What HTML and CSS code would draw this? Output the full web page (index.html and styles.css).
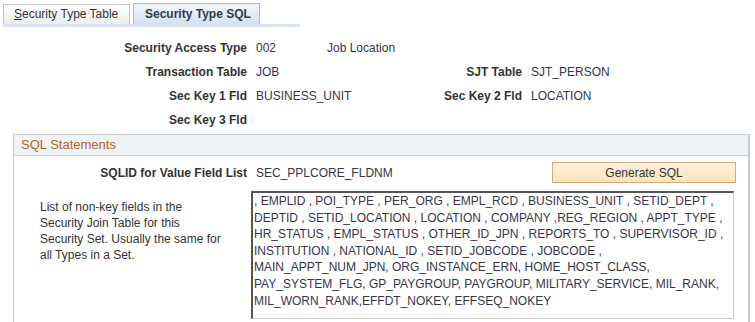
FILE: index.html
```html
<!DOCTYPE html>
<html lang="en">
<head>
    <meta charset="UTF-8">
    <title>Security Type SQL</title>
    <link rel="stylesheet" href="styles.css">
</head>
<body>
    <div class="tabs">
        <div class="tab"><u>S</u>ecurity Type Table</div>
        <div class="tab active">Security Type SQL</div>
    </div>
    <div class="tab-rule"></div>

    <div class="fields">
        <div class="label">Security Access Type</div>
        <div class="value wide"><span class="code">002</span>Job Location</div>

        <div class="label">Transaction Table</div>
        <div class="value">JOB</div>
        <div class="label">SJT Table</div>
        <div class="value">SJT_PERSON</div>

        <div class="label">Sec Key 1 Fld</div>
        <div class="value">BUSINESS_UNIT</div>
        <div class="label">Sec Key 2 Fld</div>
        <div class="value">LOCATION</div>

        <div class="label">Sec Key 3 Fld</div>
        <div class="value wide"></div>
    </div>

    <section class="group">
        <div class="group-head">SQL Statements</div>
        <div class="group-body">
            <div class="sqlid-row">
                <div class="label">SQLID for Value Field List</div>
                <div class="value">SEC_PPLCORE_FLDNM</div>
                <button class="gen-button">Generate SQL</button>
            </div>
            <div class="list-row">
                <div class="help">
                    List of non-key fields in the<br>
                    Security Join Table for this<br>
                    Security Set. Usually the same for<br>
                    all Types in a Set.
                </div>
                <div class="field-list">, EMPLID , POI_TYPE , PER_ORG , EMPL_RCD , BUSINESS_UNIT , SETID_DEPT ,<br>DEPTID , SETID_LOCATION , LOCATION , COMPANY ,REG_REGION , APPT_TYPE ,<br>HR_STATUS , EMPL_STATUS , OTHER_ID_JPN , REPORTS_TO , SUPERVISOR_ID ,<br>INSTITUTION , NATIONAL_ID , SETID_JOBCODE , JOBCODE ,<br>MAIN_APPT_NUM_JPN, ORG_INSTANCE_ERN, HOME_HOST_CLASS,<br>PAY_SYSTEM_FLG, GP_PAYGROUP, PAYGROUP, MILITARY_SERVICE, MIL_RANK,<br>MIL_WORN_RANK,EFFDT_NOKEY, EFFSEQ_NOKEY</div>
            </div>
        </div>
    </section>
</body>
</html>
```

FILE: styles.css
```css
body {
    margin: 0;
    font-family: 'Liberation Sans', Arial, sans-serif;
    font-size: 12px;
    color: #333;
    background: #fff;
    overflow: hidden;
}

/* Page tabs */
.tabs {
    display: flex;
    align-items: flex-end;
    gap: 3px;
    padding: 3px 0 0 3px;
}

.tab {
    box-sizing: border-box;
    height: 20px;
    line-height: 18px;
    padding: 0 10px;
    min-width: 127px;
    white-space: nowrap;
    border: 1px solid #c4c4c4;
    border-bottom: none;
    background: linear-gradient(to bottom, #ffffff, #ededed);
    color: #333;
}

.tab.active {
    height: 21px;
    line-height: 20px;
    min-width: 125px;
    padding: 0 8px 0 11px;
    font-weight: bold;
    border-color: #a9b4c6;
    background: linear-gradient(to bottom, #f1f5fb, #d6e1f1);
    color: #2f3a4a;
}

.tab-rule {
    margin-left: 3px;
    width: 297px;
    height: 3px;
    background: #dbe5f3;
}

/* Key fields */
.fields {
    display: grid;
    grid-template-columns: 247px 178px 79px auto;
    grid-auto-rows: 24px;
    column-gap: 9px;
    align-items: center;
    margin-top: 9px;
}

.label {
    font-weight: bold;
    text-align: right;
    white-space: nowrap;
}

.value {
    white-space: nowrap;
    color: #35354a;
}

.value.wide {
    grid-column: 2 / 5;
}

.code {
    display: inline-block;
    width: 71px;
}

/* SQL Statements group */
.group {
    margin: 2px 5px 0 13px;
    border-left: 1px solid #c8c8c8;
    border-right: 2px solid #c8cbd0;
    height: 189px;
}

.group-head {
    height: 20px;
    line-height: 20px;
    padding-left: 7px;
    font-size: 13px;
    color: #b5622c;
    background: #eff3f5;
    border-top: 1px solid #c8cbd0;
    border-bottom: 1px solid #cdd2d6;
}

.group-body {
    padding-top: 6px;
}

.sqlid-row {
    display: grid;
    grid-template-columns: 233px 287px 184px;
    column-gap: 9px;
    align-items: center;
    height: 21px;
}

.gen-button {
    height: 21px;
    padding: 0;
    font-family: inherit;
    font-size: 12px;
    color: #333;
    border: 1px solid #d7a77a;
    background: linear-gradient(to bottom, #fdf1dc, #fde4b9);
}

.list-row {
    display: grid;
    grid-template-columns: 237px 483px;
    margin-top: 8px;
}

.help {
    padding: 8px 0 0 26px;
    line-height: 16px;
}

.field-list {
    box-sizing: border-box;
    height: 128px;
    padding: 0 1px;
    line-height: 16.6px;
    white-space: nowrap;
    overflow: hidden;
    color: #35354a;
    border-top: 2px solid #555;
    border-left: 2px solid #555;
    border-right: 1px solid #c8c8c8;
    border-bottom: 1px solid #c8c8c8;
}
```
